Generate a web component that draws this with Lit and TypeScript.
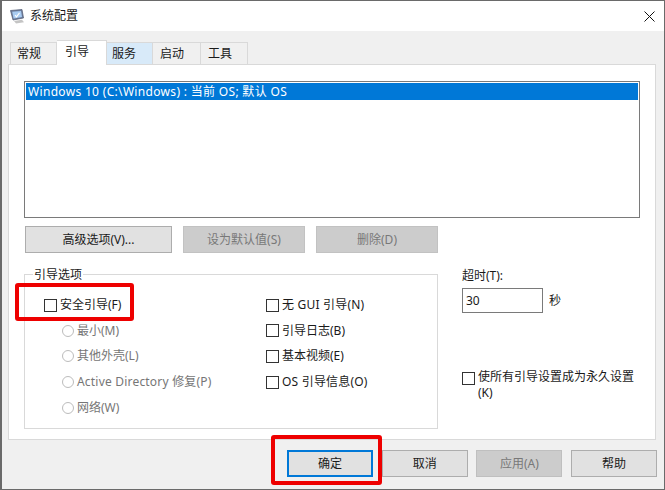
import { LitElement, html, css } from "lit";
import { customElement } from "lit/decorators.js";

@customElement("app-root")
export class AppRoot extends LitElement {
  static styles = css`
    :host { display: block; width: 665px; height: 490px; font-family: "Noto Sans", "Noto Sans CJK SC", sans-serif; font-size: 12px; color: #1a1a1a; line-height: 16px; }
    * { box-sizing: border-box; }
    .win { position: relative; width: 665px; height: 490px; background: #f0f0f0; border: 1px solid #6a6a6a; border-left-width: 2px; display: flex; flex-direction: column; overflow: hidden; }
    .title { height: 30px; background: #fff; display: flex; align-items: center; flex: none; padding-left: 8px; }
    .title .ttl { margin-left: 5px; font-size: 12px; }
    .close { margin-left: auto; margin-right: 9px; display: block; }
    .tabs { display: flex; align-items: flex-end; height: 33px; padding-left: 8px; flex: none; }
    .tab { height: 22px; width: 47px; padding-left: 7px; border: 1px solid #d9d9d9; border-bottom: none; border-left: none; background: #f0f0f0; display: flex; align-items: center; }
    .tab:first-child { border-left: 1px solid #d9d9d9; padding-left: 6px; }
    .tab.hl { background: #d8eaf9; width: 46px; padding-left: 5px; }
    .tab.w { width: 48px; }
    .tab.on { height: 25px; width: 50px; padding-left: 8px; background: #fff; margin-bottom: -1px; position: relative; z-index: 1; padding-bottom: 3px; }
    .panel { margin-left: 6px; width: 648px; height: 376px; background: #fff; border: 1px solid #d9d9d9; padding: 16px 15px 0; flex: none; }
    .list { height: 137px; border: 1px solid #7a7a7a; padding: 1px; }
    .sel { background: #0078d7; color: #fff; height: 17px; line-height: 17px; padding-left: 2px; font-size: 12px; white-space: nowrap; letter-spacing: 0.32px; }
    .btns { display: flex; gap: 11px; margin-top: 8px; margin-left: 1px; }
    .btn { width: 147px; height: 27px; background: #e1e1e1; border: 1px solid #adadad; display: flex; align-items: center; justify-content: center; }
    .btn.m { width: 122px; }
    .dis { background: #cccccc; border-color: #c2c2c2; color: #787878; }
    .lower { display: flex; margin-top: 21px; }
    .group { position: relative; width: 414px; height: 155px; border: 1px solid #d9d9d9; display: grid; grid-template-columns: 241px 1fr; padding-top: 17.5px; }
    .legend { position: absolute; left: 8px; top: -8px; background: #fff; padding: 0 1px; height: 16px; }
    .col { display: flex; flex-direction: column; }
    .col .row { height: 25.6px; }
    .row { display: flex; align-items: center; white-space: nowrap; }
    .c1 { padding-left: 19px; }
    .c1 .rad { margin-left: 18px; }
    .cb { width: 13px; height: 13px; border: 1px solid #333; background: #fff; margin-right: 3px; flex: none; }
    .rad { width: 12px; height: 12px; border: 1px solid #bcbcbc; border-radius: 50%; background: #fff; margin-right: 3px; flex: none; }
    .g { color: #767676; }
    .wide { letter-spacing: 0.2px; }
    .side { margin-left: 24px; width: 176px; display: flex; flex-direction: column; }
    .to { margin-top: -6px; }
    .inrow { display: flex; align-items: center; margin-top: 4px; }
    .input { width: 81px; height: 25px; border: 1px solid #7a7a7a; padding-left: 3px; display: flex; align-items: center; }
    .sec { margin-left: 6px; }
    .perm { display: flex; margin-top: 56px; line-height: 16px; }
    .perm .cb { margin-top: 3px; }
    .perm div.t { width: 160px; flex: none; }
    .foot { display: flex; margin-top: 10px; padding-left: 285px; flex: none; }
    .fb { width: 86px; height: 27px; background: #e1e1e1; border: 1px solid #adadad; display: flex; align-items: center; justify-content: center; margin-right: 8.67px; flex: none; }
    .fb.def { border: 2px solid #0078d7; }
    .fb.dis { background: #cccccc; border-color: #bfbfbf; }
    .mark { position: absolute; border: 4px solid #ee0000; border-radius: 3px; pointer-events: none; }
    .m1 { left: 13px; top: 282px; width: 119px; height: 38px; }
    .m2 { left: 269px; top: 434px; width: 111px; height: 50px; }
  `;

  private option(label: string, kind: string, grey = false, wide = false) {
    return html`<div class="row ${grey ? "g" : ""} ${wide ? "wide" : ""}"><span class=${kind}></span>${label}</div>`;
  }

  render() {
    return html`<div class="win">
      <div class="title">
        <svg width="15" height="15" viewBox="0 0 15 15">
          <path d="M0.5 1.5 L12 0.5 L13.5 9 L3 11 Z" fill="#6f7f9f" stroke="#4d5870" stroke-width="0.7"/>
          <path d="M2.2 2.8 L11 2 L12 8 L3.6 9.4 Z" fill="#a9ccf2"/>
          <path d="M5 6.2 L6.5 7.8 L9.5 3.8" stroke="#ffffff" stroke-width="1.1" fill="none"/>
          <path d="M4 12 L12 10.8 L14 13.2 L6 14.5 Z" fill="#c4c4c4"/>
        </svg>
        <span class="ttl">系统配置</span>
        <svg class="close" width="11" height="11" viewBox="0 0 11 11"><path d="M0.5 0.5 L10.5 10.5 M10.5 0.5 L0.5 10.5" stroke="#111" stroke-width="1" fill="none"/></svg>
      </div>
      <div class="tabs">
        <div class="tab">常规</div>
        <div class="tab on">引导</div>
        <div class="tab hl">服务</div>
        <div class="tab w">启动</div>
        <div class="tab">工具</div>
      </div>
      <div class="panel">
        <div class="list"><div class="sel">Windows 10 (C:\\Windows) : 当前 OS; 默认 OS</div></div>
        <div class="btns">
          <div class="btn">高级选项(V)...</div>
          <div class="btn m dis">设为默认值(S)</div>
          <div class="btn m dis">删除(D)</div>
        </div>
        <div class="lower">
          <div class="group">
            <div class="legend">引导选项</div>
            <div class="col c1">
              ${this.option("安全引导(F)", "cb")}
              ${this.option("最小(M)", "rad", true)}
              ${this.option("其他外壳(L)", "rad", true)}
              ${this.option("Active Directory 修复(P)", "rad", true, true)}
              ${this.option("网络(W)", "rad", true)}
            </div>
            <div class="col">
              ${this.option("无 GUI 引导(N)", "cb", false, true)}
              ${this.option("引导日志(B)", "cb")}
              ${this.option("基本视频(E)", "cb")}
              ${this.option("OS 引导信息(O)", "cb", false, true)}
            </div>
          </div>
          <div class="side">
            <div class="to">超时(T):</div>
            <div class="inrow"><div class="input">30</div><span class="sec">秒</span></div>
            <div class="perm"><span class="cb"></span><div class="t">使所有引导设置成为永久设置 (K)</div></div>
          </div>
        </div>
      </div>
      <div class="foot">
        <div class="fb def">确定</div>
        <div class="fb">取消</div>
        <div class="fb dis">应用(A)</div>
        <div class="fb">帮助</div>
      </div>
      <div class="mark m1"></div>
      <div class="mark m2"></div>
    </div>`;
  }
}
